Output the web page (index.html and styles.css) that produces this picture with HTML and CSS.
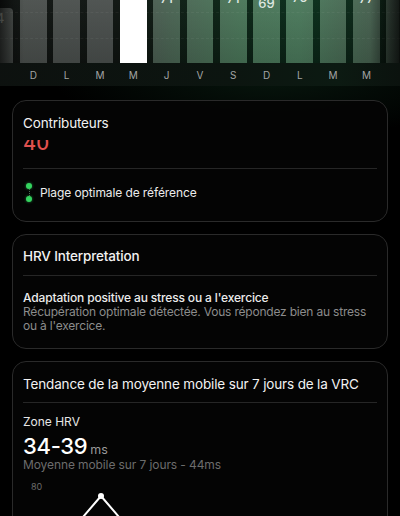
FILE: index.html
```html
<!DOCTYPE html>
<html lang="fr">
<head>
<meta charset="utf-8">
<link rel="stylesheet" href="styles.css">
</head>
<body>
<div class="chart">
  <div class="bars">
    <div class="bar edge" style="height:55px"><span class="val">4</span></div>
    <div class="bar" style="height:90px"></div>
    <div class="bar" style="height:90px"></div>
    <div class="bar" style="height:90px"></div>
    <div class="bar today" style="height:90px"></div>
    <div class="bar" style="height:75.5px"><span class="val">71</span></div>
    <div class="bar" style="height:78.5px"><span class="val">74</span></div>
    <div class="bar" style="height:75.5px"><span class="val">71</span></div>
    <div class="bar" style="height:70.5px"><span class="val">69</span></div>
    <div class="bar" style="height:76.5px"><span class="val">75</span></div>
    <div class="bar" style="height:92px"></div>
    <div class="bar" style="height:75.5px"><span class="val">77</span></div>
    <div class="bar edge" style="height:90px"></div>
  </div>
  <div class="gridline g1"></div>
  <div class="gridline g2"></div>
  <div class="fade"></div>
</div>
<div class="days">
  <span></span><span>D</span><span>L</span><span>M</span><span>M</span><span>J</span><span>V</span><span>S</span><span>D</span><span>L</span><span>M</span><span>M</span><span></span>
</div>

<section class="card card-contrib">
  <h2 class="card-title">Contributeurs</h2>
  <div class="clip"><span class="score">40</span></div>
  <div class="divider div-contrib"></div>
  <div class="legend">
    <span class="range-mark"><i class="dot"></i><i class="dash"></i><i class="dot"></i></span>
    <span class="legend-text">Plage optimale de référence</span>
  </div>
</section>

<section class="card card-interp">
  <h2 class="card-title title-strong">HRV Interpretation</h2>
  <div class="divider div-interp"></div>
  <p class="interp-head">Adaptation positive au stress ou a l'exercice</p>
  <p class="interp-body">Récupération optimale détectée. Vous répondez bien au stress ou à l'exercice.</p>
</section>

<section class="card card-trend">
  <h2 class="card-title">Tendance de la moyenne mobile sur 7 jours de la VRC</h2>
  <div class="divider div-trend"></div>
  <div class="zone-label">Zone HRV</div>
  <div class="zone-value"><span class="big">34-39</span><span class="unit">ms</span></div>
  <div class="zone-sub">Moyenne mobile sur 7 jours - 44ms</div>
  <div class="axis">80</div>
  <svg class="trend" width="356" height="40" viewBox="0 0 356 40">
    <polyline points="60,26 78,5 96,26" fill="none" stroke="#ffffff" stroke-width="2" stroke-linejoin="round"/>
    <circle cx="78" cy="5" r="3" fill="#ffffff"/>
  </svg>
</section>
</body>
</html>
```

FILE: styles.css
```css
* { box-sizing: border-box; }
html, body { margin: 0; padding: 0; }
body {
  width: 400px;
  height: 516px;
  overflow: hidden;
  background:
    radial-gradient(ellipse 220px 60px at 68% 78px, rgba(22, 70, 42, 0.3), rgba(0,0,0,0) 100%),
    #000;
  font-family: "Inter", "Noto Sans", sans-serif;
  color: #f2f2f2;
}

.chart {
  position: relative;
  height: 63px;
  overflow: hidden;
  background:
    linear-gradient(to bottom, rgba(0,0,0,0) 0%, rgba(0,0,0,0.35) 100%),
    linear-gradient(to right, #151917 0%, #141a16 30%, #10281a 55%, #0e321f 78%, #0f2a1b 92%, #0d1a12 100%);
}
.bars {
  display: flex;
  align-items: flex-end;
  gap: 6.67px;
  height: 63px;
  margin-left: -13.33px;
}
.bar {
  position: relative;
  flex: 0 0 26.67px;
  border-radius: 4px 4px 0 0;
  background:
    linear-gradient(to bottom, rgba(255,255,255,0.03) 0px, rgba(0,0,0,0.14) 63px) fixed,
    linear-gradient(to right, #4b504d 0px, #4b504e 120px, #4a6453 170px, #4a7659 240px, #4b7a5c 300px, #46614f 370px, #3a4a40 400px) fixed;
  text-align: center;
}
.bar.today { background: #ffffff; }
.val {
  display: block;
  padding-top: 4px;
  font-size: 13px;
  line-height: 13px;
  font-weight: 500;
  color: #dfe8e2;
}
.edge .val { color: rgba(220,230,224,0.5); }
.gridline {
  position: absolute;
  left: 0;
  right: 0;
  height: 0;
  border-top: 1px dashed rgba(255,255,255,0.05);
}
.g1 { top: 12px; }
.g2 { top: 38px; }
.fade {
  position: absolute;
  inset: 0;
  background: linear-gradient(to right, rgba(0,0,0,0.6) 0px, rgba(0,0,0,0.15) 14px, rgba(0,0,0,0) 24px, rgba(0,0,0,0) 370px, rgba(0,0,0,0.35) 386px, rgba(0,0,0,0.7) 400px);
  pointer-events: none;
}

.days {
  display: flex;
  gap: 6.67px;
  margin-left: -13.33px;
  height: 23px;
  align-items: center;
  background: linear-gradient(to right, #0d110f, #0c1510 60%, #0c1a12 85%, #0b120e);
}
.days span {
  flex: 0 0 26.67px;
  text-align: center;
  font-size: 10px;
  color: #a3a5a4;
  padding-top: 1px;
}

.card {
  margin: 0 12px;
  border: 1px solid #2a2a2a;
  border-radius: 14px;
  padding: 0 10px;
  background: rgba(4,4,4,0.9);
}
.card-title {
  margin: 0;
  padding-top: 13px;
  font-size: 13.5px;
  line-height: 18px;
  font-weight: 400;
  color: #f2f2f2;
  letter-spacing: -0.15px;
}
.title-strong { font-weight: 500; padding-top: 12px; }
.divider { height: 1px; background: #262626; }

.card-contrib { margin-top: 14px; padding-bottom: 19px; }
.clip {
  height: 11px;
  margin-top: 8px;
  overflow: hidden;
}
.score {
  display: block;
  font-size: 20px;
  line-height: 7px;
  font-weight: 500;
  color: #e0514f;
}
.div-contrib { margin-top: 17px; }
.legend {
  display: flex;
  align-items: center;
  gap: 7px;
  height: 20px;
  margin-top: 13px;
}
.range-mark {
  display: flex;
  flex-direction: column;
  align-items: center;
  width: 8px;
  margin-left: 2px;
}
.dot {
  width: 6px;
  height: 6px;
  border-radius: 50%;
  background: #34d45f;
  box-shadow: 0 0 3px rgba(52,212,95,0.6);
}
.dash {
  width: 0;
  height: 7px;
  border-left: 1px dotted #4a6a52;
}
.legend-text {
  font-size: 12px;
  color: #ececec;
  letter-spacing: -0.1px;
}

.card-interp { margin-top: 12px; padding-bottom: 15px; }
.div-interp { margin-top: 10px; }
.interp-head {
  margin: 15px 0 0;
  font-size: 12px;
  line-height: 14px;
  font-weight: 500;
  color: #ececec;
  letter-spacing: -0.15px;
}
.interp-body {
  margin: 0;
  font-size: 12px;
  line-height: 14px;
  color: #8c8c8c;
  letter-spacing: -0.2px;
}

.card-trend { margin-top: 12px; height: 200px; }
.div-trend { margin-top: 9px; }
.zone-label {
  margin-top: 11px;
  font-size: 12px;
  line-height: 16px;
  color: #e6e6e6;
}
.zone-value {
  margin-top: 4px;
  height: 24px;
  display: flex;
  align-items: baseline;
  gap: 3px;
}
.big {
  font-size: 22px;
  line-height: 24px;
  font-weight: 500;
  color: #ffffff;
  letter-spacing: -0.3px;
}
.unit {
  font-size: 12.5px;
  color: #9a9a9a;
}
.zone-sub {
  margin-top: 0;
  font-size: 12px;
  line-height: 14px;
  color: #6c6c6c;
  letter-spacing: -0.1px;
}
.axis {
  margin-top: 9px;
  padding-left: 8px;
  font-size: 9px;
  line-height: 12px;
  color: #6a6a6a;
}
.trend { display: block; margin-top: -2px; }
```
